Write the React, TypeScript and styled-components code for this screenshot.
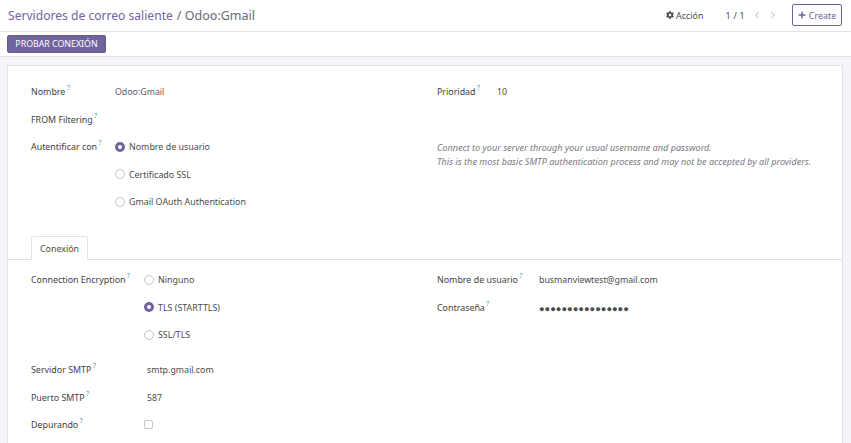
import React from "react";
import styled, { createGlobalStyle } from "styled-components";
import { FaCog, FaPlus, FaChevronLeft, FaChevronRight } from "react-icons/fa";

const GlobalStyle = createGlobalStyle`
  html, body {
    margin: 0;
    padding: 0;
    background: #f4f5f8;
    font-family: "Noto Sans", "Open Sans", sans-serif;
    font-size: 8.9px;
    color: #4c4c4c;
    overflow: hidden;
  }
`;

const Page = styled.div`
  width: 851px;
  height: 443px;
  overflow: hidden;
  display: flex;
  flex-direction: column;
`;

const TopBar = styled.header`
  height: 31px;
  background: #fff;
  border-bottom: 1px solid #e3e3e6;
  display: flex;
  align-items: center;
  justify-content: space-between;
  padding: 0 9px 0 8px;
  flex: none;
`;

const Breadcrumb = styled.div`
  font-size: 12.1px;
  color: #71639e;
  display: flex;
  gap: 4px;

  span {
    font-size: 12.5px;
    color: #6a6a72;
  }
`;

const Controls = styled.div`
  display: flex;
  align-items: center;
  margin-top: -1px;
`;

const ActionMenu = styled.div`
  display: flex;
  align-items: center;
  gap: 2px;
  color: #4c4c4c;
  margin-right: 22px;
`;

const Pager = styled.div`
  margin-right: 8px;
  color: #4c4c4c;
  letter-spacing: 0.3px;
`;

const PagerArrow = styled.div`
  display: flex;
  align-items: center;
  color: #d2d2d6;
  font-size: 8px;
  margin-right: 8px;
`;

const CreateButton = styled.button`
  height: 22px;
  width: 50px;
  margin-left: 7px;
  padding: 0;
  background: #fff;
  border: 1px solid #71639e;
  border-radius: 2px;
  color: #71639e;
  font: inherit;
  display: flex;
  align-items: center;
  justify-content: center;
  gap: 3px;

  svg {
    font-size: 8px;
  }
`;

const ButtonBar = styled.div`
  height: 21px;
  background: #fff;
  border-bottom: 1px solid #e3e3e6;
  padding: 3px 7px 0;
  flex: none;
`;

const PrimaryButton = styled.button`
  height: 18px;
  width: 99px;
  padding: 0;
  background: #71639e;
  border: 1px solid #65598e;
  border-radius: 2px;
  color: #fff;
  font: inherit;
  font-size: 8.8px;
  display: block;
`;

const Sheet = styled.main`
  flex: none;
  height: 378px;
  margin: 8px 8px 0 7px;
  background: #fff;
  border: 1px solid #e3e3e6;
  border-bottom: 0;
  box-sizing: border-box;
  padding-top: 12px;
`;

const Columns = styled.div`
  display: grid;
  grid-template-columns: 406px 1fr;
  padding-left: 23px;
`;

const Row = styled.div<{ $label: number }>`
  display: grid;
  grid-template-columns: ${(p) => p.$label}px 1fr;
`;

const Label = styled.label`
  height: 27.5px;
  line-height: 28px;
  color: #3f3f3f;
  white-space: nowrap;
`;

const Hint = styled.sup`
  color: #3f9ac0;
  font-size: 6.5px;
  line-height: 0;
  margin-left: 1.5px;
  vertical-align: 5px;
`;

const Value = styled.div`
  height: 27.5px;
  line-height: 29.5px;
  font-size: 8.8px;
  color: #4c4c4c;
  white-space: nowrap;
`;

const Link = styled(Value)`
  color: #5a5f73;
`;

const Secret = styled(Value)`
  font-size: 9.3px;
  letter-spacing: 0;
`;

const RadioItem = styled.div`
  height: 27.5px;
  display: flex;
  align-items: center;
  gap: 4px;
  color: #4c4c4c;
  white-space: nowrap;
`;

const RadioDot = styled.span<{ $on?: boolean }>`
  width: 10px;
  height: 10px;
  border-radius: 50%;
  box-sizing: border-box;
  background: #fff;
  border: ${(p) => (p.$on ? "3px solid #71639e" : "1px solid #c4c6cb")};
  flex: none;
`;

const Check = styled.span`
  width: 9px;
  height: 9px;
  box-sizing: border-box;
  border: 1px solid #c4c6cb;
  border-radius: 2px;
  display: block;
  margin-top: 9px;
`;

const HelpText = styled.p`
  margin: 8px 0 0;
  font-style: italic;
  font-size: 9.1px;
  line-height: 14px;
  color: #7a7a84;
  white-space: nowrap;
`;

const Spacer = styled.div`
  height: 27.5px;
`;

const TabStrip = styled.div`
  margin-top: 20px;
  height: 24px;
  box-sizing: border-box;
  border-bottom: 1px solid #dee0e8;
  padding-left: 23px;
  display: flex;
`;

const Tab = styled.div`
  width: 57px;
  height: 24px;
  box-sizing: border-box;
  border: 1px solid #e3e3e6;
  border-bottom: 1px solid #fff;
  border-radius: 2px 2px 0 0;
  text-align: center;
  line-height: 24px;
  color: #4c4c4c;
  background: #fff;
`;

const TabBody = styled.div`
  padding-top: 6.5px;
`;

const LowerRows = styled.div`
  margin-top: 7.5px;
  padding-left: 23px;
`;

const Q = () => <Hint>?</Hint>;

export default function App() {
  return (
    <Page>
      <GlobalStyle />
      <TopBar>
        <Breadcrumb>
          Servidores de correo saliente <span>/ Odoo:Gmail</span>
        </Breadcrumb>
        <Controls>
          <ActionMenu>
            <FaCog size={8} /> Acción
          </ActionMenu>
          <Pager>1 / 1</Pager>
          <PagerArrow>
            <FaChevronLeft />
          </PagerArrow>
          <PagerArrow>
            <FaChevronRight />
          </PagerArrow>
          <CreateButton>
            <FaPlus /> Create
          </CreateButton>
        </Controls>
      </TopBar>
      <ButtonBar>
        <PrimaryButton>PROBAR CONEXIÓN</PrimaryButton>
      </ButtonBar>
      <Sheet>
        <Columns>
          <div>
            <Row $label={84}>
              <Label>Nombre<Q /></Label>
              <Link>Odoo:Gmail</Link>
            </Row>
            <Row $label={84}>
              <Label>FROM Filtering<Q /></Label>
              <Value />
            </Row>
            <Row $label={84}>
              <Label>Autentificar con<Q /></Label>
              <div>
                <RadioItem><RadioDot $on />Nombre de usuario</RadioItem>
                <RadioItem><RadioDot />Certificado SSL</RadioItem>
                <RadioItem><RadioDot />Gmail OAuth Authentication</RadioItem>
              </div>
            </Row>
          </div>
          <div>
            <Row $label={60}>
              <Label>Prioridad<Q /></Label>
              <Value>10</Value>
            </Row>
            <Spacer />
            <HelpText>
              Connect to your server through your usual username and password.
              <br />
              This is the most basic SMTP authentication process and may not be accepted by all providers.
            </HelpText>
          </div>
        </Columns>
        <TabStrip>
          <Tab>Conexión</Tab>
        </TabStrip>
        <TabBody>
          <Columns>
            <Row $label={113}>
              <Label>Connection Encryption<Q /></Label>
              <div>
                <RadioItem><RadioDot />Ninguno</RadioItem>
                <RadioItem><RadioDot $on />TLS (STARTTLS)</RadioItem>
                <RadioItem><RadioDot />SSL/TLS</RadioItem>
              </div>
            </Row>
            <div>
              <Row $label={102}>
                <Label>Nombre de usuario<Q /></Label>
                <Value>busmanviewtest@gmail.com</Value>
              </Row>
              <Row $label={102}>
                <Label>Contraseña<Q /></Label>
                <Secret>●●●●●●●●●●●●●●●●</Secret>
              </Row>
            </div>
          </Columns>
          <LowerRows>
            <Row $label={116}>
              <Label>Servidor SMTP<Q /></Label>
              <Value>smtp.gmail.com</Value>
            </Row>
            <Row $label={116}>
              <Label>Puerto SMTP<Q /></Label>
              <Value>587</Value>
            </Row>
            <Row $label={113}>
              <Label>Depurando<Q /></Label>
              <Check />
            </Row>
          </LowerRows>
        </TabBody>
      </Sheet>
    </Page>
  );
}
